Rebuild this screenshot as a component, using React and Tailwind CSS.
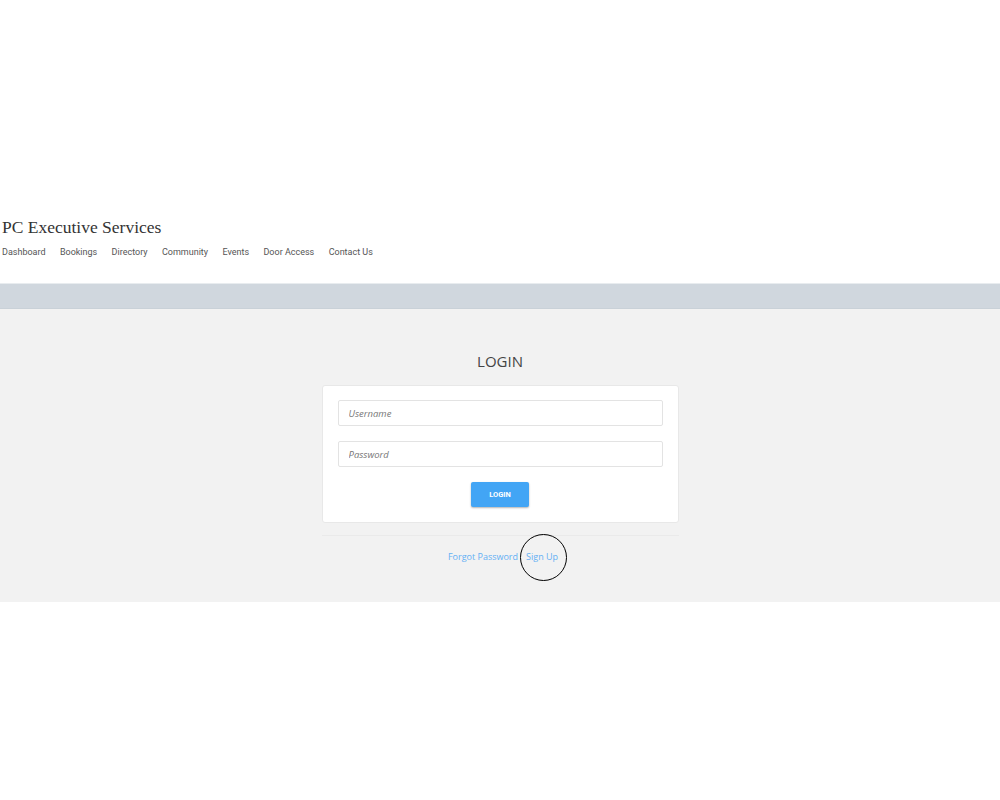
export default function App() {
  const nav = ["Dashboard", "Bookings", "Directory", "Community", "Events", "Door Access", "Contact Us"];
  return (
    <div className="w-[1000px] min-h-[800px] bg-white">
      <div className="h-[213px]" />
      <header className="px-[2px]">
        <h1 className="text-[17.5px] leading-[28px] text-[#333]" style={{ fontFamily: "'Liberation Serif', serif" }}>
          PC Executive Services
        </h1>
        <nav className="flex gap-[14.4px] mt-[1px] text-[9px] leading-[20px] text-[#555]" style={{ fontFamily: "Roboto, sans-serif" }}>
          {nav.map((n) => (
            <span key={n}>{n}</span>
          ))}
        </nav>
      </header>
      <div className="h-[21px]" />
      <div className="h-[1px] bg-[#e8ecef]" />
      <div className="h-[25px] bg-[#d0d7de] border-b border-[#c9d1d8]" />
      <main className="bg-[#f2f2f2] h-[293px] flex flex-col items-center pt-[42px]" style={{ fontFamily: "'Open Sans', sans-serif" }}>
        <h2 className="text-[15px] leading-[20px] text-[#444]">LOGIN</h2>
        <div className="mt-[14px] w-[357px] bg-white rounded-[3px] border border-[#e8e8e8] px-[15px] pt-[14px] pb-[15px] flex flex-col items-center">
          <input
            placeholder="Username"
            className="w-full h-[26px] border border-[#e3e3e3] rounded-[2px] px-[10px] text-[9.5px] italic text-[#555] placeholder:text-[#777] outline-none"
          />
          <input
            placeholder="Password"
            type="text"
            className="mt-[15px] w-full h-[26px] border border-[#e3e3e3] rounded-[2px] px-[10px] text-[9.5px] italic text-[#555] placeholder:text-[#777] outline-none"
          />
          <button
            className="mt-[15px] w-[58px] h-[25px] bg-[#42a5f5] rounded-[2px] text-white text-[7.5px] font-bold shadow-[0_1px_2px_rgba(0,0,0,0.3)]"
            style={{ fontFamily: "Roboto, sans-serif" }}
          >
            LOGIN
          </button>
        </div>
        <div className="mt-[12px] w-[357px] h-[1px] bg-[#eaeaea]" />
        <div className="relative mt-[14px] flex gap-[8px] text-[9px] leading-[14px] text-[#64b0f4] pl-[6px]">
          <span>Forgot Password</span>
          <span className="relative">
            Sign Up
            <span className="absolute left-[-6px] top-[-16px] w-[47px] h-[47px] rounded-full border-[1.5px] border-black" />
          </span>
        </div>
      </main>
    </div>
  );
}
